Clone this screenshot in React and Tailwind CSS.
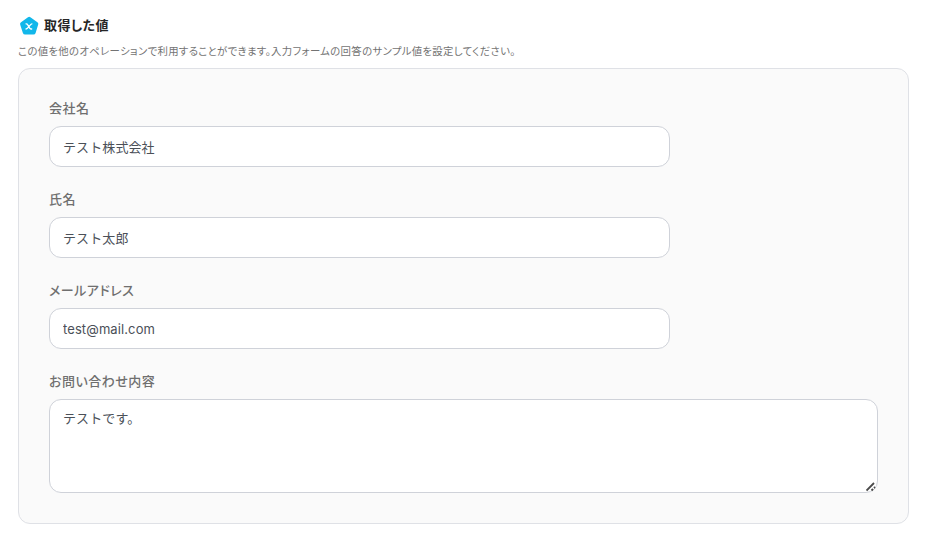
const fields = [
  { name: "company", label: "会社名", value: "テスト株式会社" },
  { name: "fullName", label: "氏名", value: "テスト太郎" },
  { name: "email", label: "メールアドレス", value: "test@mail.com" },
];

const labelClass =
  "h-[19px] text-[13px] leading-[19px] font-medium tracking-[0.5px] text-[#6f6f6f] [font-feature-settings:'palt']";
const controlClass =
  "block rounded-xl border border-[#cfd2d9] bg-white px-[13px] text-[13px] tracking-[0.1px] text-[#4b5058] outline-none";

function OutputIcon() {
  return (
    <svg width="20" height="20" viewBox="0 0 20 20" fill="none" aria-hidden="true">
      <path
        d="M9 1.2a2 2 0 0 1 2.4 0l7 5a2.1 2.1 0 0 1 .8 2.4l-2.6 8.3a2.3 2.3 0 0 1-2.2 1.7H6.1a2.3 2.3 0 0 1-2.2-1.6L1.2 8.7a2.1 2.1 0 0 1 .8-2.4z"
        fill="#12b7ea"
      />
      <path
        d="M7 7.8h.4c.6 0 .9.2 1.2.8l2.1 3.6c.3.5.6.8 1.2.8h.8M12.9 7.8c-1.9 0-3.800 5.2-5.9 5.2"
        stroke="#fff"
        strokeWidth="1.3"
        strokeLinecap="round"
      />
    </svg>
  );
}

function Field({ name, label, value }) {
  return (
    <div className="flex flex-col gap-2">
      <label htmlFor={name} className={labelClass}>{label}</label>
      <input id={name} defaultValue={value} className={`${controlClass} h-[41px] w-[621px]`} />
    </div>
  );
}

export default function App() {
  return (
    <main className="h-[544px] bg-white px-[18px] pt-4 font-['Inter','Noto_Sans_CJK_JP',sans-serif]">
      <header className="flex h-5 items-center gap-[5px] pl-[1px]">
        <OutputIcon />
        <h1 className="h-5 text-[13px] leading-[18px] font-semibold tracking-[0.4px] text-[#262626] [font-feature-settings:'palt']">
          取得した値
        </h1>
      </header>
      <p className="mt-2 h-4 text-[10.4px] leading-4 tracking-[0.33px] text-[#737373] [font-feature-settings:'palt']">
        この値を他のオペレーションで利用することができます。入力フォームの回答のサンプル値を設定してください。
      </p>

      <section className="mt-2 flex h-[456px] w-[891px] flex-col gap-[23px] rounded-xl border border-[#dfe1e6] bg-[#fafafa] px-[30px] pt-[30px]">
        {fields.map((field) => (
          <Field key={field.name} {...field} />
        ))}
        <div className="flex flex-col gap-2">
          <label htmlFor="message" className={labelClass}>お問い合わせ内容</label>
          <div className="relative">
            <textarea
              id="message"
              defaultValue="テストです。"
              className={`${controlClass} h-[94px] w-full resize-none py-[9px] leading-[19px]`}
            />
            <svg className="absolute right-[2px] bottom-[1px]" width="10" height="10" viewBox="0 0 10 10" aria-hidden="true">
              <path d="M.5 8.5 8 1M5.500 8.5 7 7M8 6l1-1" stroke="#4a4a4a" strokeWidth="1.8" />
            </svg>
          </div>
        </div>
      </section>
    </main>
  );
}
